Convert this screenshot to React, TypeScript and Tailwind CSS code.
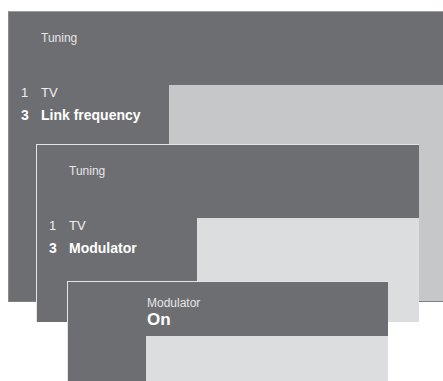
import React from 'react';

interface MenuItem {
  num: string;
  label: string;
  active?: boolean;
}

interface TuningPanelProps {
  className: string;
  items: MenuItem[];
  light: string;
}

const font = "font-['Liberation_Sans_Narrow','Liberation_Sans',Arial,sans-serif]";

const TuningPanel: React.FC<TuningPanelProps> = ({ className, items, light }) => {
  return (
    <div className={`absolute flex flex-col bg-[#6d6e71] ${className}`}>
      <div className="h-[73px] pl-[32px] pt-[18px] text-[12px] leading-[16px] text-[#e6e6e6]">Tuning</div>
      <div className="flex flex-1">
        <div className="w-[160px] pl-[12px] flex flex-col gap-[6px]">
          {items.map((item) => (
            <div
              key={item.num}
              className={
                item.active
                  ? 'flex text-[14px] leading-[16px] font-bold text-white'
                  : 'flex text-[13px] leading-[16px] text-[#f0f0f0]'
              }
            >
              <span className="w-[20px]">{item.num}</span>
              <span>{item.label}</span>
            </div>
          ))}
        </div>
        <div className={`flex-1 ${light}`} />
      </div>
    </div>
  );
};

export default function App() {
  return (
    <div className={`relative w-[443px] h-[381px] overflow-hidden bg-white ${font}`}>
      {/* back window */}
      <TuningPanel
        className="left-[8px] top-[11px] w-[435px] h-[291px] border-t border-l border-b border-t-[#9c9da0] border-l-[#8a8b8e] border-b-[#808185]"
        light="bg-[#c6c7c9]"
        items={[
          { num: '1', label: 'TV' },
          { num: '3', label: 'Link frequency', active: true },
        ]}
      />

      {/* middle window */}
      <TuningPanel
        className="left-[36px] top-[144px] w-[383px] h-[178px] border-t border-l border-[#e4e4e6]"
        light="bg-[#dcdddf]"
        items={[
          { num: '1', label: 'TV' },
          { num: '3', label: 'Modulator', active: true },
        ]}
      />

      {/* front window */}
      <div className="absolute left-[67px] top-[281px] w-[321px] h-[100px] flex flex-col bg-[#6d6e71] border-t border-l border-[#e4e4e6]">
        <div className="h-[54px] pl-[79px] pt-[14px]">
          <div className="text-[12px] leading-[14px] text-[#e6e6e6]">Modulator</div>
          <div className="text-[17px] leading-[20px] font-bold text-white">On</div>
        </div>
        <div className="flex flex-1">
          <div className="w-[78px]" />
          <div className="flex-1 bg-[#dcdddf]" />
        </div>
      </div>
    </div>
  );
}
